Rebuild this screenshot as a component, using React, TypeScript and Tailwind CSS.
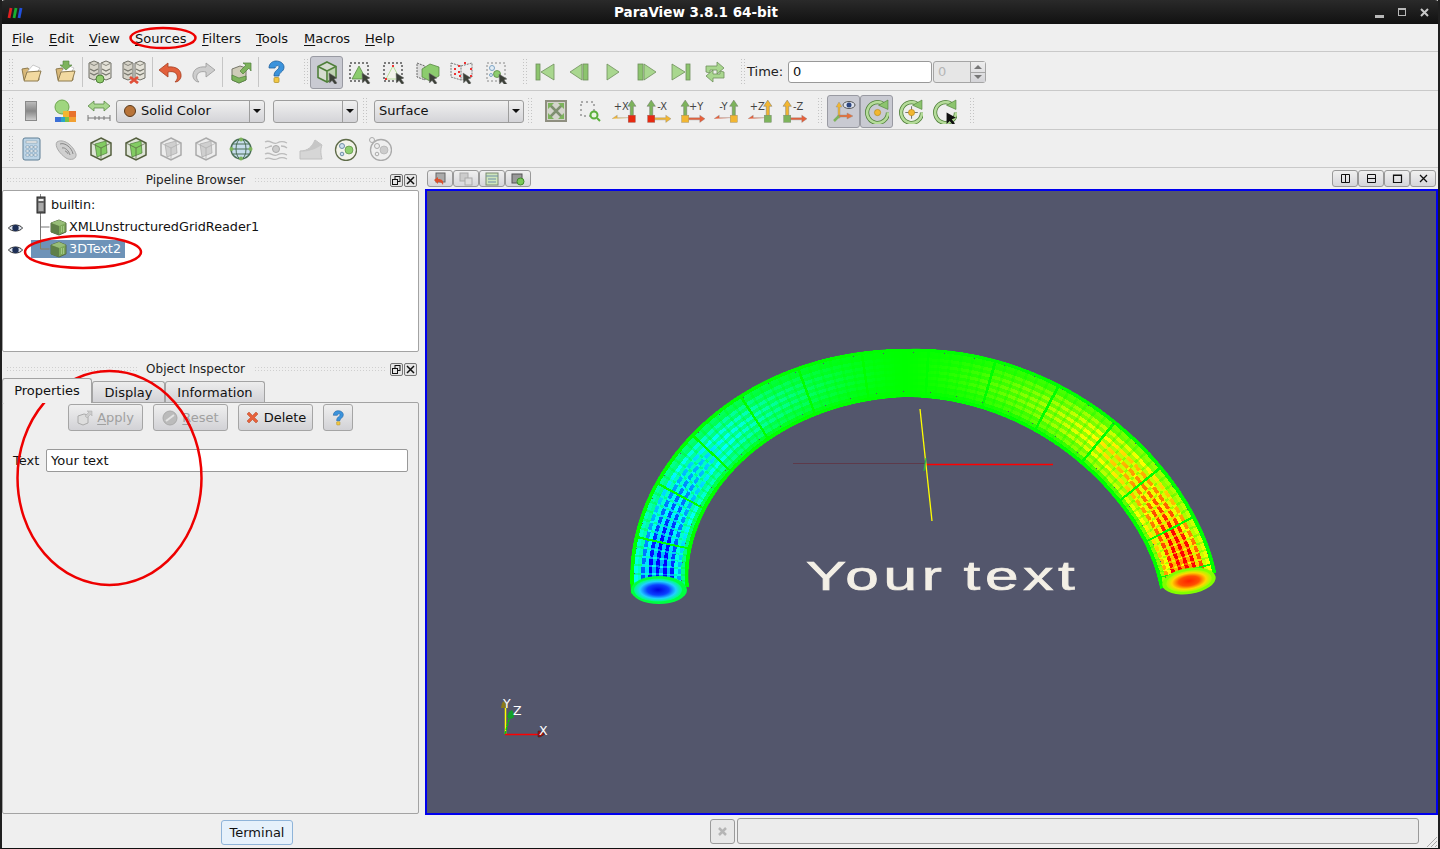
import React from "react";

const G = "#7db35c";
const GD = "#4f7f3a";
const GL = "#b5dc9a";

const Svg = ({ children, s = 24 }: { children: React.ReactNode; s?: number }) => (
  <svg width={s} height={s} viewBox="0 0 24 24" fill="none">
    {children}
  </svg>
);

const Cursor = ({ x = 14, y = 13 }: { x?: number; y?: number }) => (
  <path
    transform={`translate(${x} ${y})`}
    d="M0 0l8 5-3 1 3 4-2 1.500-3-4-2.500 2.500z"
    fill="#3c4038"
    stroke="#777"
    strokeWidth="0.5"
  />
);

const Folder = ({ arrow }: { arrow?: boolean }) => (
  <Svg>
    <path d="M3 9l6-1 1 2 9-1 1 11H5z" fill="#d9b878" stroke="#8d7a4e" />
    <path d="M7 13l7-8 7 3-4 6z" fill="#fff" stroke="#aaa" strokeWidth="0.6" />
    <path d="M5 21l3-9 14-1-3 10z" fill="#f2d9a0" stroke="#8d7a4e" />
    {arrow && <path d="M10 1h6v4h3l-6 5-6-5h3z" fill={G} stroke={GD} strokeWidth="0.6" />}
  </Svg>
);

const Server = ({ bad }: { bad?: boolean }) => (
  <Svg>
    <path d="M1 3l5-2 5 2v15l-5 2-5-2z" fill="#d6d3c8" stroke="#6f6f66" />
    <path d="M13 3l5-2 5 2v15l-5 2-5-2z" fill="#e4e2d8" stroke="#6f6f66" />
    <path d="M2 3.500l4 2 4-2M14 3.500l4 2 4-2" stroke="#6f6f66" strokeWidth="0.8" />
    <path d="M2 9l4 2 4-2M2 13l4 2 4-2M14 9l4 2 4-2M14 13l4 2 4-2" stroke="#77776e" strokeWidth="1.200" />
    {bad ? (
      <path d="M8 17l8 6M16 17l-8 6" stroke="#e0503a" strokeWidth="2.800" />
    ) : (
      <circle cx="12" cy="19" r="4" fill="#8fcb6a" stroke={GD} />
    )}
  </Svg>
);

const Undo = ({ gray, flip }: { gray?: boolean; flip?: boolean }) => (
  <Svg>
    <g transform={flip ? "translate(24 0) scale(-1 1)" : undefined}>
      <path
        d="M1 10l9-7v4c8-1 14 3 13 10-1 3-3 5-6 5 2-2 3-4 2-7-1-3-5-4-9-3v5z"
        fill={gray ? "#cdcdcd" : "#e2603c"}
        stroke={gray ? "#999" : "#a63f22"}
        strokeWidth="0.8"
      />
    </g>
  </Svg>
);

const SaveState = () => (
  <Svg>
    <path d="M4 9l8-3 6 2v12l-7 3-7-3z" fill="#cfccb8" stroke="#77776a" />
    <path d="M4 15l7 3 7-2v4l-7 3-7-3z" fill={G} stroke={GD} strokeWidth="0.7" />
    <path d="M12 11l6-6-3-2h8v8l-2-3-6 6z" fill={G} stroke={GD} strokeWidth="0.7" />
  </Svg>
);

const Help = ({ s = 24 }: { s?: number }) => (
  <Svg s={s}>
    <path
      d="M5 8c0-5 4-7 7-7 5 0 8 3 8 6 0 5-5 5-5 9h-5c0-6 5-6 5-9 0-2-3-2-4 1z"
      fill="#3b93dc"
      stroke="#1f5f9c"
      strokeWidth="0.8"
    />
    <rect x="10" y="17.500" width="5" height="5" rx="1" fill="#f2c744" stroke="#a98b20" strokeWidth="0.7" />
  </Svg>
);

const Cube = ({ c = G, d = GD }: { c?: string; d?: string }) => (
  <g>
    <path d="M12 2l9 4.500v11L12 22l-9-4.500v-11z" fill="#d6dcd0" stroke={d} strokeWidth="1.600" />
    <path d="M3 6.500l9 4.500 9-4.500M12 11v11" stroke={d} strokeWidth="1.600" />
    <path d="M12 11l9-4.500v11L12 22z" fill={c} opacity="0.25" />
  </g>
);

const Dash = () => (
  <rect x="2" y="3" width="18" height="18" fill="none" stroke="#555" strokeWidth="1.500" strokeDasharray="2 2" />
);

const SelSurface = () => (
  <Svg>
    <Dash />
    <path d="M11 6l7 13H4z" fill="#8ccc6e" stroke={GD} strokeWidth="0.7" />
    <Cursor />
  </Svg>
);

const SelPoints = () => (
  <Svg>
    <Dash />
    <path d="M11 6l7 13H4z" fill="#f3f3ea" stroke={GL} />
    <path d="M10 5h2v2h-2zM3 18h2v2H3zM17 18h2v2h-2z" fill="#e33" />
    <Cursor />
  </Svg>
);

const SelFrustum = () => (
  <Svg>
    <path d="M1 3l8 3v14l-8-3z" fill="#ddd" stroke="#666" strokeDasharray="2 1" />
    <path d="M6 9l8-5 9 3v9l-9 5-8-4z" fill="#8ccc6e" stroke={GD} strokeWidth="0.7" />
    <Cursor x={13} y={13} />
  </Svg>
);

const SelFrustumPts = () => (
  <Svg>
    <path d="M1 3l10 3v14L1 17zM11 6l11-3v14l-11 3" fill="#eee" stroke="#777" strokeDasharray="2 1" />
    <path d="M4 8h2v2H4zM8 5h2v2H8zM4 13h2v2H4zM8 11h2v2H8zM14 2h2v2h-2zM20 8h2v2h-2zM20 15h2v2h-2zM9 15h2v2H9z" fill="#e33" />
    <Cursor x={13} y={13} />
  </Svg>
);

const SelBlock = () => (
  <Svg>
    <rect x="3" y="3" width="18" height="18" stroke="#888" strokeDasharray="2 2" />
    <circle cx="8" cy="8" r="2.500" stroke="#7da5c5" fill="#e3edf5" />
    <circle cx="13" cy="14" r="3.500" fill="#8ccc6e" stroke={GD} strokeWidth="0.7" />
    <circle cx="7" cy="15" r="1.500" stroke="#7da5c5" fill="#e3edf5" />
    <Cursor x={15} y={14} />
  </Svg>
);

const Vcr = ({ type }: { type: string }) => {
  const bar = { fill: "#8cc46e", stroke: "#6f8f5c", strokeWidth: 0.8 };
  const tri = { fill: "#a9d78f", stroke: "#6f8f5c", strokeWidth: 0.8 };
  return (
    <Svg>
      {type === "first" && (
        <>
          <rect x="3" y="4" width="4" height="16" {...bar} />
          <path d="M21 4v16L8 12z" {...tri} />
        </>
      )}
      {type === "prev" && (
        <>
          <path d="M15 4v16L3 12z" {...tri} />
          <rect x="16" y="4" width="5" height="16" {...bar} />
        </>
      )}
      {type === "play" && <path d="M6 4v16l12-8z" {...tri} />}
      {type === "next" && (
        <>
          <rect x="3" y="4" width="5" height="16" {...bar} />
          <path d="M9 4v16l12-8z" {...tri} />
        </>
      )}
      {type === "last" && (
        <>
          <path d="M3 4v16l13-8z" {...tri} />
          <rect x="17" y="4" width="4" height="16" {...bar} />
        </>
      )}
      {type === "loop" && (
        <>
          <path d="M3 12V6h11V2l7 6-7 6v-4H7v3z" {...tri} />
          <path d="M21 12v6H10v4l-7-6 7-6v4h7v-3z" {...tri} />
        </>
      )}
    </Svg>
  );
};

const Scalar = () => (
  <Svg>
    <circle cx="9" cy="8" r="7" fill="#9fd67f" stroke="#6ea64e" />
    <path d="M10 12h6v6h-6z" fill="#f2b632" />
    <path d="M16 12h7v6h-7z" fill="#e8722c" />
    <path d="M2 18h6v5H2z" fill="#3b6fd6" />
    <path d="M8 18h4v5H8z" fill="#2aa6c9" />
    <path d="M12 18h4v5h-4z" fill="#7cc243" />
    <path d="M16 18h7v5h-7z" fill="#f2a032" />
  </Svg>
);

const Rescale = () => (
  <Svg>
    <path d="M1 7l6-5v3h10V2l6 5-6 5V9H7v3z" fill="#a9d78f" stroke={GD} strokeWidth="0.7" />
    <path d="M1 19h22M1 16v6M8 17v4M12 17v4M17 17v4M23 16v6" stroke="#777" />
  </Svg>
);

const ResetCam = () => (
  <Svg>
    <rect x="2" y="2" width="20" height="20" fill="#d4d4cc" stroke="#8f8f80" strokeWidth="2" />
    <path d="M6 6l12 12M18 6L6 18" stroke="#7f8f70" strokeWidth="2.500" />
    <path d="M4 4h6L4 10zM20 4h-6l6 6zM4 20h6l-6-6zM20 20h-6l6-6z" fill={G} />
  </Svg>
);

const ZoomBox = () => (
  <Svg>
    <rect x="3" y="3" width="13" height="14" stroke="#666" strokeDasharray="2 3" />
    <circle cx="16" cy="16" r="3.500" stroke="#5ab03a" strokeWidth="2" fill="#e8f5e0" />
    <path d="M19 19l3 3" stroke="#5ab03a" strokeWidth="2" />
  </Svg>
);

const AxisIcon = ({
  label,
  side,
  up,
  arm,
  sq,
}: {
  label: string;
  side: "l" | "r";
  up: string;
  arm: string;
  sq: string;
}) => {
  const x = side === "r" ? 19 : 5;
  const dir = side === "r" ? -1 : 1;
  return (
    <Svg s={25}>
      <path d={`M${x - 1.500} 19V7h-2.500L${x} 1l4 6h-2.500v12z`} fill={up} stroke="#666" strokeWidth="0.4" />
      <path
        d={`M${x} 18h${dir * 14}v-2.500l${dir * 5} 3.500-${dir * 5} 3.500v-2.500h-${dir * 14}z`}
        fill={arm}
        stroke="#777"
        strokeWidth="0.3"
      />
      <rect x={x - 3.500} y="15.500" width="7" height="7" fill={sq} stroke="#777" strokeWidth="0.3" />
      <text
        x={side === "r" ? 9 : 15.500}
        y="11"
        textAnchor="middle"
        fontFamily="'DejaVu Sans', sans-serif"
        fontSize="9.500"
        fill="#444"
      >
        {label}
      </text>
    </Svg>
  );
};

const OrientAxes = () => (
  <Svg>
    <path d="M6 19V8h-2l3-5 3 5H8v11z" fill="#f2b632" stroke="#888" strokeWidth="0.4" />
    <path d="M6 16h9v-2l6 3-6 3v-2H6z" fill="#e8703a" stroke="#888" strokeWidth="0.4" />
    <path d="M7 17l-5 5" stroke={G} strokeWidth="2.500" />
    <ellipse cx="17" cy="6" rx="6" ry="3.500" fill="#dfe4ee" stroke="#555" />
    <circle cx="17" cy="6" r="2.500" fill="#2d4680" />
  </Svg>
);

const Rotate = ({ kind }: { kind: "center" | "pick" | "cursor" }) => (
  <Svg s={25}>
    <path d="M19 5a10 10 0 1 0 4 8" stroke={GD} strokeWidth="4" />
    <path d="M19 5a10 10 0 1 0 4 8" stroke={GL} strokeWidth="2.500" />
    <path d="M14 6l9-5v9z" fill="#8cc46e" stroke={GD} strokeWidth="0.6" />
    {kind === "center" && <circle cx="13" cy="13" r="3" fill="#f2b632" stroke="#b08716" strokeWidth="0.6" />}
    {kind === "pick" && (
      <>
        <path d="M13 7v12M7 13h12" stroke="#777" />
        <circle cx="13" cy="13" r="3" fill="#f2b632" stroke="#b08716" strokeWidth="0.6" />
      </>
    )}
    {kind === "cursor" && <path d="M14 13l9 5-4 1.500 3 4-2 1.500-3-4-3 3z" fill="#111" />}
  </Svg>
);

const Calc = () => (
  <Svg>
    <rect x="4" y="1" width="17" height="22" rx="2" fill="#bcd4e6" stroke="#5f7f95" />
    <rect x="7" y="4" width="11" height="2" fill="#f6f6f6" stroke="#7a8a95" strokeWidth="0.5" />
    <path
      d="M7 9h3v2H7zM11 9h3v2h-3zM15 9h3v2h-3zM7 13h3v2H7zM11 13h3v2h-3zM15 13h3v2h-3zM7 17h3v2H7zM11 17h3v2h-3zM15 17h3v2h-3z"
      fill="#fff"
      stroke="#5f7f95"
      strokeWidth="0.5"
    />
  </Svg>
);

const Contour = () => (
  <Svg>
    <path d="M3 5c6-4 16 3 19 12 1 5-5 7-10 4C6 17 0 9 3 5z" fill="#cfcfcf" stroke="#aaa" />
    <path d="M6 7c5-2 12 4 13 10M8 11c3-1 7 3 8 7M11 14c1 0 3 2 3 3" stroke="#888" />
  </Svg>
);

const BoxCut = ({ gray }: { gray?: boolean }) => (
  <Svg>
    <path d="M12 1l10 5v12l-10 5-10-5V6z" fill={gray ? "#ededed" : "#dfe5d8"} stroke={gray ? "#aaa" : "#55603f"} strokeWidth="1.500" />
    <path d="M6 7l11-3 1 12-10 4z" fill={gray ? "#cfcfcf" : "#82cc62"} stroke={gray ? "#aaa" : GD} strokeWidth="0.7" />
    <path d="M2 6l10 5 10-5M12 11v12" stroke={gray ? "#aaa" : "#55603f"} strokeWidth="0.7" />
  </Svg>
);

const Globe = () => (
  <Svg>
    <circle cx="12" cy="12" r="10" fill="#c7dcec" stroke="#4b6f57" strokeWidth="1.500" />
    <ellipse cx="12" cy="12" rx="5" ry="10" stroke="#4b6f57" />
    <path d="M2 12h20M4 7h16M4 17h16" stroke="#4b6f57" />
    <circle cx="12" cy="2.500" r="2" fill={G} />
    <circle cx="12" cy="21.500" r="2" fill={G} />
    <circle cx="2.500" cy="12" r="2" fill={G} />
    <circle cx="21.500" cy="12" r="2" fill={G} />
  </Svg>
);

const Stream = () => (
  <Svg>
    <path d="M1 5c5-3 8 3 12 1s6-2 10 0M1 11c3 0 4-2 7-2M17 9c2 0 4 0 6 2M1 17c5-3 8 3 12 1s6-2 10 0M1 22c5-3 8 2 12 0s6-2 10 0" stroke="#bbb" strokeWidth="1.300" />
    <circle cx="12" cy="12" r="3.500" fill="#ccc" stroke="#aaa" />
  </Svg>
);

const Warp = () => (
  <Svg>
    <path d="M1 14c8 0 12-4 15-11l7 5c-2 5-1 10 0 14H1z" fill="#d6d6d6" stroke="#c0c0c0" />
    <path d="M1 14c8 0 12-4 15-11l7 5c-5 3-14 8-22 6z" fill="#c6c6c6" />
  </Svg>
);

const Group = ({ gray }: { gray?: boolean }) => (
  <Svg>
    <circle cx="13" cy="13" r="10.500" stroke={gray ? "#aaa" : "#5e6b48"} strokeWidth="1.300" fill={gray ? "none" : "#f3f3ea"} />
    <circle cx="16" cy="13" r="4" fill={gray ? "#ccc" : "#8ed06e"} stroke={gray ? "#aaa" : GD} strokeWidth="0.6" />
    <circle cx="9" cy="9" r="2.500" fill={gray ? "none" : "#cfe0ee"} stroke={gray ? "#aaa" : "#6f8fa8"} />
    <circle cx="9" cy="17" r="1.800" fill={gray ? "none" : "#cfe0ee"} stroke={gray ? "#aaa" : "#6f8fa8"} />
    {gray && <circle cx="4" cy="3" r="2.500" stroke="#aaa" fill="#efefef" />}
  </Svg>
);

const Handle = ({ className = "" }: { className?: string }) => (
  <div
    className={`w-[6px] h-[28px] shrink-0 bg-[radial-gradient(#c4c4c4_1px,transparent_1px)] bg-[length:3px_3px] ${className}`}
  />
);

const Sep = ({ className = "" }: { className?: string }) => (
  <div className={`w-px h-[30px] bg-[#c6c6c6] shrink-0 ${className}`} />
);

const Btn = ({ children, on, w = "w-[34px]" }: { children: React.ReactNode; on?: boolean; w?: string }) => (
  <div
    className={
      on
        ? "w-[33px] h-[33px] shrink-0 flex items-center justify-center rounded-[3px] border border-[#999aa2] bg-[#c9cad2]"
        : `${w} h-[32px] shrink-0 flex items-center justify-center`
    }
  >
    {children}
  </div>
);

const Arrow = () => <div className="w-0 h-0 border-x-[4px] border-x-transparent border-t-[4px] border-t-[#111]" />;

const Combo = ({ w, children }: { w: string; children?: React.ReactNode }) => (
  <div
    className={`${w} h-[23px] shrink-0 flex rounded-[3px] border border-[#9d9d9d] bg-gradient-to-b from-[#f0f0f0] to-[#d4d4d8]`}
  >
    <div className="flex-1 flex items-center gap-[5px] pl-[7px] min-w-0">{children}</div>
    <div className="w-[15px] border-l border-[#9d9d9d] flex items-center justify-center">
      <Arrow />
    </div>
  </div>
);

const U = ({ children }: { children: React.ReactNode }) => <span className="underline underline-offset-2">{children}</span>;

const Menu = ({ k, rest, w }: { k: string; rest: string; w: string }) => (
  <div className={w}>
    <U>{k}</U>
    {rest}
  </div>
);

const FloatBtns = () => (
  <div className="flex gap-px">
    <div className="w-[13px] h-[13px] border border-[#777] rounded-[2px] bg-[#e6e6e6] flex items-center justify-center">
      <svg width="9" height="9" viewBox="0 0 9 9" fill="none" stroke="#111">
        <rect x="3" y="0.500" width="5" height="5" />
        <rect x="0.500" y="3.500" width="5" height="5" fill="#e6e6e6" />
      </svg>
    </div>
    <div className="w-[13px] h-[13px] border border-[#777] rounded-[2px] bg-[#e6e6e6] flex items-center justify-center">
      <svg width="9" height="9" viewBox="0 0 9 9" stroke="#111" strokeWidth="1.500">
        <path d="M1 1l7 7M8 1L1 8" />
      </svg>
    </div>
  </div>
);

const DockTitle = ({ title }: { title: string }) => (
  <div className="h-[18px] flex items-center pl-[4px] pr-[2px] text-[12px] text-[#222]">
    <div className="flex-1 h-[6px] bg-[radial-gradient(#cfcfcf_1px,transparent_1px)] bg-[length:3px_3px]" />
    <div className="px-[9px]">{title}</div>
    <div className="flex-1 h-[6px] bg-[radial-gradient(#cfcfcf_1px,transparent_1px)] bg-[length:3px_3px] mr-[5px]" />
    <FloatBtns />
  </div>
);

const Eye = () => (
  <svg width="15" height="10" viewBox="0 0 15 10">
    <path d="M0.500 5C3 1 12 1 14.500 5 12 9 3 9 0.500 5z" fill="#dfe4ee" stroke="#333" />
    <circle cx="7.500" cy="5" r="3.200" fill="#1e2f55" />
  </svg>
);

const SourceCube = () => (
  <svg width="17" height="17" viewBox="0 0 17 17">
    <path d="M1 4l8-3 7 3v9l-7 3-8-3z" fill="#7da85a" stroke="#566b45" />
    <path d="M1 4l8 3 7-3-7-3z" fill="#97bd78" />
    <path d="M9 7v9l-8-3V4z" fill="#5f7f48" />
    <path d="M11 8h3M11 10h3M11 12h3" stroke="#c6e5ae" strokeDasharray="1 1" />
  </svg>
);

const ServerTiny = () => (
  <svg width="16" height="22" viewBox="0 0 16 22">
    <path d="M7.500 0v3M7.500 19v3" stroke="#888" />
    <rect x="4" y="3" width="8" height="16" fill="#666" stroke="#222" />
    <rect x="5.500" y="5" width="5" height="2" fill="#eee" />
    <rect x="5.500" y="9" width="5" height="8" fill="#aaa" />
  </svg>
);

const Guide = ({ last }: { last?: boolean }) => (
  <svg width="19" height="22" viewBox="0 0 19 22" className="shrink-0">
    <path d={last ? "M9.500 0v11h9" : "M9.500 0v22M9.500 11h9"} stroke={last ? "#8a7f5a" : "#777"} fill="none" />
  </svg>
);

const Tab = ({ label, w, on }: { label: string; w: string; on?: boolean }) =>
  on ? (
    <div className={`${w} h-[25px] -mb-px z-10 flex items-center justify-center rounded-t-[3px] border border-b-0 border-[#a3a3a3] bg-[#efefef]`}>
      {label}
    </div>
  ) : (
    <div
      className={`${w} h-[21px] pt-[2px] flex items-center justify-center rounded-t-[3px] border border-b-0 border-[#a3a3a3] bg-gradient-to-b from-[#ededed] to-[#d2d2d6]`}
    >
      {label}
    </div>
  );

const PanelBtn = ({ children, w = "w-[75px]", dim }: { children: React.ReactNode; w?: string; dim?: boolean }) => (
  <div
    className={`${w} h-[27px] flex items-center justify-center gap-[4px] rounded-[3px] border border-[#a5a5a5] bg-gradient-to-b from-[#efefef] to-[#d2d2d6] ${dim ? "text-[#a0a0a0]" : "text-[#111]"}`}
  >
    {children}
  </div>
);

const ViewBtn = ({ children }: { children: React.ReactNode }) => (
  <div className="w-[26px] h-[17px] flex items-center justify-center rounded-[3px] border border-[#999] bg-gradient-to-b from-[#f0f0f0] to-[#d6d6da]">
    {children}
  </div>
);

// --- tube drawing, sampled along an ellipse ---
const colorOf = (s: number) => {
  const t = Math.min(1, Math.abs(s));
  if (s < 0) {
    if (t < 0.5) return `rgb(0,255,${Math.round(t * 510)})`;
    return `rgb(0,${Math.round(255 - (t - 0.5) * 510)},255)`;
  }
  if (t < 0.5) return `rgb(${Math.round(t * 510)},255,0)`;
  return `rgb(255,${Math.round(255 - (t - 0.5) * 510)},0)`;
};

const center = (a: number): [number, number] => {
  const sn = Math.max(0, Math.sin(a));
  const cs = Math.cos(a);
  const p = cs < 0 ? 1.05 : 1.2;
  return [924 + 264 * cs - 19 * sn, 585 - 212 * Math.pow(sn, p) - 5 * cs];
};

const buildTube = () => {
  const N = 320;
  const M = 16;
  const quads: { p: string; c: string }[] = [];
  const dots: { x: number; y: number }[] = [];
  const pt = (i: number, j: number): [number, number] => {
    const a = Math.PI - (Math.PI * i) / N;
    const [x, y] = center(a);
    const [x2, y2] = center(a - 0.002);
    const [x0, y0] = center(a + 0.002);
    const dx = i === N ? x - x0 : x2 - x;
    const dy = i === N ? y - y0 : y2 - y;
    const l = Math.hypot(dx, dy) || 1;
    const half = 24 + 5 * Math.abs(Math.cos(a));
    const v = (j / M) * 2 - 1;
    return [x + (-dy / l) * half * v, y + (dx / l) * half * v];
  };
  for (let i = 0; i < N; i++) {
    const u = (i + 0.5) / N;
    const g = Math.pow(Math.abs(2 * u - 1), 1.3) * (u < 0.5 ? -1.25 : 1.3);
    for (let j = 0; j < M; j++) {
      const v = ((j + 0.5) / M) * 2 - 1;
      let s = g * (1 - v * v * 0.9);
      if (j % 2 === 0) s *= 0.6;
      if (i % 4 === 0) s *= 0.7;
      if (i % 24 === 0) s = 0;
      if (Math.abs(v) > 0.86) s = 0;
      const q = [pt(i, j), pt(i + 1, j), pt(i + 1, j + 1), pt(i, j + 1)];
      quads.push({
        p: q.map((c) => `${c[0].toFixed(1)},${c[1].toFixed(1)}`).join(" "),
        c: colorOf(s),
      });
      if ((j === 1 || j === M - 2) && (i * 7 + j * 3) % 11 === 0) {
        const [dx, dy] = pt(i, j);
        dots.push({ x: Math.round(dx), y: Math.round(dy) });
      }
    }
  }
  const outer: string[] = [];
  for (let i = 0; i <= N; i++) outer.push(pt(i, 0).map((n) => n.toFixed(1)).join(","));
  for (let i = N; i >= 0; i--) outer.push(pt(i, M).map((n) => n.toFixed(1)).join(","));
  return { quads, dots, outer: outer.join(" ") };
};

const tube = buildTube();

const Scene = () => (
  <svg width="1009" height="622" viewBox="427 191 1009 622" className="block">
    <defs>
      <radialGradient id="capL">
        <stop offset="0" stopColor="#0000e0" />
        <stop offset="0.45" stopColor="#0a40ff" />
        <stop offset="0.75" stopColor="#20d0ff" />
        <stop offset="1" stopColor="#00ff80" />
      </radialGradient>
      <radialGradient id="capR">
        <stop offset="0" stopColor="#ff2000" />
        <stop offset="0.45" stopColor="#ff5000" />
        <stop offset="0.75" stopColor="#ffd800" />
        <stop offset="1" stopColor="#a0ff00" />
      </radialGradient>
    </defs>
    <polygon points={tube.outer} fill="#00ff00" />
    <g shapeRendering="crispEdges">
      {tube.quads.map((q, i) => (
        <polygon key={i} points={q.p} fill={q.c} />
      ))}
      {tube.dots.map((d, i) => (
        <rect key={i} x={d.x} y={d.y} width="1" height="1" fill="#53566c" />
      ))}
    </g>
    <ellipse cx="659" cy="590" rx="28" ry="14" fill="#00ff40" />
    <ellipse cx="658" cy="590" rx="24" ry="11.500" fill="url(#capL)" />
    <ellipse cx="1189" cy="581" rx="27" ry="13" transform="rotate(-9 1189 581)" fill="#80ff00" />
    <ellipse cx="1189" cy="581" rx="23" ry="10.500" transform="rotate(-9 1189 581)" fill="url(#capR)" />

    <path d="M793 463.500H925" stroke="#5d3a4a" />
    <path d="M925 464.500H1053" stroke="#ff0000" strokeWidth="1.300" />
    <path d="M920 409L932 521" stroke="#ffff00" strokeWidth="1.300" />
    <path d="M926 458L924 471" stroke="#22c040" strokeWidth="1.200" />

    <text
      transform="translate(806 590) scale(1.47 1)"
      fontFamily="'Liberation Sans', sans-serif"
      fontSize="41"
      letterSpacing="3.200"
      wordSpacing="-3"
      fill="#f3efe6"
      stroke="#f3efe6"
      strokeWidth="0.7"
    >
      Your text
    </text>

    <path d="M505.500 734V704" stroke="#ffff00" strokeWidth="1.500" />
    <path d="M505 734L511 712" stroke="#00d000" strokeWidth="1.500" strokeDasharray="3 1" />
    <path d="M505 734.500H540" stroke="#ff0000" strokeWidth="1.500" />
    <path d="M501 708l1-5 2-2 2 2 2 5z" fill="#8a7a1a" />
    <path d="M507 717l2-5 3-2 2 4 0 3-3 2z" fill="#12a02a" />
    <path d="M538 731v6h2l5-3-5-3z" fill="#a01010" stroke="#222" strokeWidth="0.5" />
    <g fontFamily="'DejaVu Sans', sans-serif" fontSize="12.500" fill="#fff">
      <text x="503" y="708">Y</text>
      <text x="513" y="715">Z</text>
      <text x="539" y="735">X</text>
    </g>
  </svg>
);

export default function App() {
  return (
    <div className="relative w-[1440px] h-[849px] overflow-hidden flex flex-col bg-[#efefef] border-x-2 border-b border-x-[#1f1f1f] border-b-[#111] text-[13px] text-[#111] font-['DejaVu_Sans',sans-serif]">
      {/* window title */}
      <div className="h-[24px] -mx-[2px] shrink-0 flex items-center bg-gradient-to-b from-[#2a2a2a] to-[#111] rounded-t-[5px] relative">
        <svg width="16" height="12" viewBox="0 0 16 12" className="ml-[7px] mt-[2px]">
          <path d="M4 1L2 11" stroke="#e02020" strokeWidth="2.800" />
          <path d="M9 1L7 11" stroke="#18b030" strokeWidth="2.800" />
          <path d="M14 1l-2 10" stroke="#2050e0" strokeWidth="2.800" />
        </svg>
        <div className="ml-[591px] font-bold text-[13.500px] text-white">ParaView 3.8.1 64-bit</div>
        <div className="ml-auto mr-[11px] flex items-center gap-[14px]">
          <div className="w-[9px] h-[3px] mt-[8px] bg-[#b8b8b8]" />
          <div className="w-[8px] h-[8px] border border-[#b8b8b8] border-t-2" />
          <svg width="9" height="9" viewBox="0 0 9 9" stroke="#c8c8c8" strokeWidth="2">
            <path d="M1 1l7 7M8 1L1 8" />
          </svg>
        </div>
      </div>

      {/* menu bar */}
      <div className="h-[28px] shrink-0 flex items-center pl-[10px] pt-[2px] border-b border-[#c9c9c9]">
        <Menu k="F" rest="ile" w="w-[37px]" />
        <Menu k="E" rest="dit" w="w-[40px]" />
        <Menu k="V" rest="iew" w="w-[46px]" />
        <Menu k="S" rest="ources" w="w-[67px]" />
        <Menu k="F" rest="ilters" w="w-[54px]" />
        <Menu k="T" rest="ools" w="w-[48px]" />
        <Menu k="M" rest="acros" w="w-[61px]" />
        <Menu k="H" rest="elp" w="w-[40px]" />
      </div>

      {/* toolbar 1 */}
      <div className="h-[39px] shrink-0 flex items-center pl-[6px] pt-[2px] border-b border-[#c9c9c9]">
        <Handle />
        <Btn><Folder /></Btn>
        <Btn><Folder arrow /></Btn>
        <Sep />
        <Btn><Server /></Btn>
        <Btn><Server bad /></Btn>
        <Sep className="ml-[1px]" />
        <Btn><Undo /></Btn>
        <Btn><Undo gray flip /></Btn>
        <Sep className="ml-[1px]" />
        <Btn><SaveState /></Btn>
        <Sep className="ml-[1px]" />
        <Btn><Help /></Btn>
        <Handle className="ml-[10px] mr-[1px]" />
        <Btn on>
          <Svg>
            <Cube />
            <Cursor />
          </Svg>
        </Btn>
        <Btn><SelSurface /></Btn>
        <Btn><SelPoints /></Btn>
        <Btn><SelFrustum /></Btn>
        <Btn><SelFrustumPts /></Btn>
        <Btn><SelBlock /></Btn>
        <Handle className="ml-[9px]" />
        <Btn><Vcr type="first" /></Btn>
        <Btn><Vcr type="prev" /></Btn>
        <Btn><Vcr type="play" /></Btn>
        <Btn><Vcr type="next" /></Btn>
        <Btn><Vcr type="last" /></Btn>
        <Btn><Vcr type="loop" /></Btn>
        <Handle className="ml-[8px]" />
        <div className="w-[42px] pl-[1px] text-[#222]">Time:</div>
        <div className="w-[144px] h-[22px] flex items-center pl-[4px] rounded-[3px] border border-[#999] bg-white">0</div>
        <div className="w-[53px] h-[22px] ml-px flex rounded-[3px] border border-[#a5a5a5] bg-[#e6e6e6]">
          <div className="flex-1 pl-[4px] leading-[20px] text-[#b5b5b5]">0</div>
          <div className="w-[15px] flex flex-col border-l border-[#a5a5a5] bg-gradient-to-b from-[#eee] to-[#d4d4d8]">
            <div className="flex-1 flex items-center justify-center border-b border-[#a5a5a5]">
              <div className="w-0 h-0 border-x-[4px] border-x-transparent border-b-[4px] border-b-[#777]" />
            </div>
            <div className="flex-1 flex items-center justify-center">
              <div className="w-0 h-0 border-x-[4px] border-x-transparent border-t-[4px] border-t-[#777]" />
            </div>
          </div>
        </div>
      </div>

      {/* toolbar 2 */}
      <div className="h-[39px] shrink-0 flex items-center pl-[6px] pt-[2px] border-b border-[#c9c9c9]">
        <Handle />
        <Btn>
          <div className="w-[12px] h-[20px] border border-[#8a8a8a] bg-gradient-to-b from-[#bbb] via-[#888] to-[#ccc]" />
        </Btn>
        <Btn><Scalar /></Btn>
        <Btn><Rescale /></Btn>
        <Combo w="w-[149px]">
          <span className="w-[12px] h-[12px] rounded-full bg-[#b8743a] border border-[#5a3a1c]" />
          <span>Solid Color</span>
        </Combo>
        <div className="w-[8px]" />
        <Combo w="w-[85px]" />
        <Handle className="ml-[4px] mr-[6px]" />
        <Combo w="w-[150px]">
          <span className="-ml-[3px]">Surface</span>
        </Combo>
        <Handle className="ml-[3px] mr-[6px]" />
        <Btn><ResetCam /></Btn>
        <Btn><ZoomBox /></Btn>
        <Btn><AxisIcon label="+X" side="r" up={G} arm="#f2b632" sq="#e82a10" /></Btn>
        <Btn><AxisIcon label="-X" side="l" up={G} arm="#f2b632" sq="#e82a10" /></Btn>
        <Btn><AxisIcon label="+Y" side="l" up={G} arm="#e8603a" sq="#f2b632" /></Btn>
        <Btn><AxisIcon label="-Y" side="r" up={G} arm="#e8603a" sq="#f2b632" /></Btn>
        <Btn><AxisIcon label="+Z" side="r" up="#f2b632" arm="#e8603a" sq={G} /></Btn>
        <Btn><AxisIcon label="-Z" side="l" up="#f2b632" arm="#e8603a" sq={G} /></Btn>
        <Handle className="ml-[6px] mr-[4px]" />
        <Btn on><OrientAxes /></Btn>
        <Btn on><Rotate kind="center" /></Btn>
        <Btn><Rotate kind="pick" /></Btn>
        <Btn><Rotate kind="cursor" /></Btn>
        <Handle className="ml-[8px]" />
      </div>

      {/* toolbar 3 */}
      <div className="h-[38px] shrink-0 flex items-center pl-[6px] border-b border-[#c9c9c9]">
        <Handle />
        <Btn w="w-[34.900px]"><Calc /></Btn>
        <Btn w="w-[34.900px]"><Contour /></Btn>
        <Btn w="w-[34.900px]"><BoxCut /></Btn>
        <Btn w="w-[34.900px]"><BoxCut /></Btn>
        <Btn w="w-[34.900px]"><BoxCut gray /></Btn>
        <Btn w="w-[34.900px]"><BoxCut gray /></Btn>
        <Btn w="w-[34.900px]"><Globe /></Btn>
        <Btn w="w-[34.900px]"><Stream /></Btn>
        <Btn w="w-[34.900px]"><Warp /></Btn>
        <Btn w="w-[34.900px]"><Group /></Btn>
        <Btn w="w-[34.900px]"><Group gray /></Btn>
      </div>

      {/* docks and view */}
      <div className="flex-1 min-h-0 flex">
        <div className="w-[417px] shrink-0 flex flex-col pt-[3px]">
          <DockTitle title="Pipeline Browser" />
          <div className="h-[162px] mt-px shrink-0 border border-[#a3a3a3] rounded-[2px] bg-white flex flex-col text-[12.800px] pt-[1px]">
            <div className="h-[22px] mt-[2px] flex items-center">
              <div className="w-[30px]" />
              <ServerTiny />
              <span className="ml-[2px]">builtin:</span>
            </div>
            <div className="h-[22px] flex items-center">
              <div className="w-[24px] flex justify-center pt-[1px] mr-[4px]"><Eye /></div>
              <Guide />
              <SourceCube />
              <span className="ml-[2px]">XMLUnstructuredGridReader1</span>
            </div>
            <div className="h-[22px] flex items-center">
              <div className="w-[24px] flex justify-center pt-[1px] mr-[4px]"><Eye /></div>
              <div className="flex items-center h-[18px] bg-[#6e93b8] text-white pr-[4px]">
                <Guide last />
                <SourceCube />
                <span className="ml-[2px]">3DText2</span>
              </div>
            </div>
          </div>
          <div className="h-[8px] shrink-0" />
          <DockTitle title="Object Inspector" />
          <div className="flex items-end h-[24px] shrink-0">
            <Tab label="Properties" w="w-[90px]" on />
            <Tab label="Display" w="w-[73px]" />
            <Tab label="Information" w="w-[100px]" />
          </div>
          <div className="flex-1 mb-[1px] border border-[#a3a3a3] rounded-[2px] flex flex-col">
            <div className="flex gap-[10px] pl-[65px] pt-[1px]">
              <PanelBtn dim>
                <svg width="16" height="16" viewBox="0 0 16 16">
                  <path d="M1 6l6-2 4 1v8l-5 2-5-2z" fill="#ddd" stroke="#aaa" />
                  <path d="M8 6l4-4-2-1h5v5l-1-2-4 4z" fill="#ccc" stroke="#aaa" strokeWidth="0.5" />
                </svg>
                <span><U>A</U>pply</span>
              </PanelBtn>
              <PanelBtn dim>
                <svg width="16" height="16" viewBox="0 0 16 16">
                  <circle cx="8" cy="8" r="7" fill="#bbb" stroke="#aaa" />
                  <path d="M4 11l8-6" stroke="#e3e3e3" strokeWidth="2" />
                </svg>
                <span><U>R</U>eset</span>
              </PanelBtn>
              <PanelBtn>
                <svg width="15" height="15" viewBox="0 0 15 15">
                  <path d="M2 4l2-2 3.500 3.500L11 2l2 2-3.500 3.500L13 11l-2 2-3.500-3.500L4 13l-2-2 3.500-3.500z" fill="#e8603a" stroke="#b04a28" strokeWidth="0.5" />
                </svg>
                <span>Delete</span>
              </PanelBtn>
              <PanelBtn w="w-[30px]"><Help s={16} /></PanelBtn>
            </div>
            <div className="flex items-center mt-[18px] pl-[10px]">
              <span className="w-[33px]">Text</span>
              <div className="w-[362px] h-[23px] flex items-center pl-[4px] rounded-[2px] border border-[#999] bg-white">Your text</div>
            </div>
          </div>
        </div>

        <div className="w-[6px] shrink-0" />

        <div className="flex-1 min-w-0 flex flex-col pt-[2px]">
          <div className="h-[19px] shrink-0 flex items-start pl-[2px] pr-[2px]">
            <ViewBtn>
              <svg width="14" height="14" viewBox="0 0 14 14">
                <rect x="3" y="1" width="9" height="9" fill="#aaa" stroke="#666" />
                <path d="M1 8l4-3v2c4 0 6 2 5 6-1-2-2-3-5-3v2z" fill="#d9502e" />
              </svg>
            </ViewBtn>
            <ViewBtn>
              <svg width="14" height="14" viewBox="0 0 14 14">
                <rect x="1" y="1" width="8" height="8" fill="#ccc" stroke="#aaa" />
                <rect x="6" y="6" width="7" height="7" fill="#ddd" stroke="#aaa" />
              </svg>
            </ViewBtn>
            <ViewBtn>
              <svg width="14" height="14" viewBox="0 0 14 14">
                <rect x="1" y="1" width="12" height="12" fill="#cfe6bd" stroke="#7a8a70" />
                <path d="M1 4h12M3 7h8M3 10h8" stroke="#6f8fa8" />
              </svg>
            </ViewBtn>
            <ViewBtn>
              <svg width="14" height="14" viewBox="0 0 14 14">
                <rect x="1" y="2" width="10" height="9" fill="#999" stroke="#555" />
                <circle cx="9.500" cy="9.500" r="3.500" fill="#7cc85a" stroke="#3f8a2a" />
              </svg>
            </ViewBtn>
            <div className="ml-auto flex">
              {["split-h", "split-v", "max", "close"].map((k) => (
                <ViewBtn key={k}>
                  <svg width="11" height="11" viewBox="0 0 11 11" fill="none" stroke="#111">
                    {k === "split-h" && <path d="M1.500 1.500h8v8h-8zM5.500 1.500v8" />}
                    {k === "split-v" && <path d="M1.500 1.500h8v8h-8zM1.500 5.500h8" />}
                    {k === "max" && <path d="M1.500 2h8v7.500h-8zM1.500 2.500h8" strokeWidth="1.200" />}
                    {k === "close" && <path d="M2 2l7 7M9 2L2 9" strokeWidth="1.300" />}
                  </svg>
                </ViewBtn>
              ))}
            </div>
          </div>
          <div className="flex-1 min-h-0 border-2 border-[#0000ee] bg-[#53566c] overflow-hidden">
            <Scene />
          </div>
        </div>
      </div>

      {/* status bar */}
      <div className="h-[33px] shrink-0 flex items-center pl-[219px] pt-[2px] relative">
        <div className="w-[72px] h-[25px] flex items-center justify-center pt-[1px] rounded-[3px] border border-[#8fb4d9] bg-[#e6f1fb]">
          Terminal
        </div>
        <div className="ml-[417px] w-[25px] h-[25px] -mt-[2px] flex items-center justify-center rounded-[3px] border border-[#9a9a9a] bg-[#e8e8e8]">
          <svg width="11" height="11" viewBox="0 0 11 11" stroke="#b5b5b5" strokeWidth="2.500">
            <path d="M2 2l7 7M9 2L2 9" />
          </svg>
        </div>
        <div className="ml-[2px] w-[682px] h-[26px] -mt-[4px] rounded-[3px] border border-[#9a9a9a] bg-[#ececec]" />
        <svg width="14" height="14" viewBox="0 0 14 14" className="absolute right-0 bottom-0" stroke="#aaa">
          <path d="M13 3L3 13M13 7l-6 6M13 11l-2 2" />
        </svg>
      </div>

      {/* red notes drawn over the capture */}
      <svg className="absolute -left-[2px] top-0 pointer-events-none" width="1440" height="849" fill="none" stroke="#ee0000" strokeWidth="2.500">
        <ellipse cx="163" cy="38" rx="32.500" ry="10" />
        <ellipse cx="83" cy="252" rx="58" ry="16" />
        <ellipse cx="109.500" cy="478" rx="92" ry="107" />
      </svg>
    </div>
  );
}
